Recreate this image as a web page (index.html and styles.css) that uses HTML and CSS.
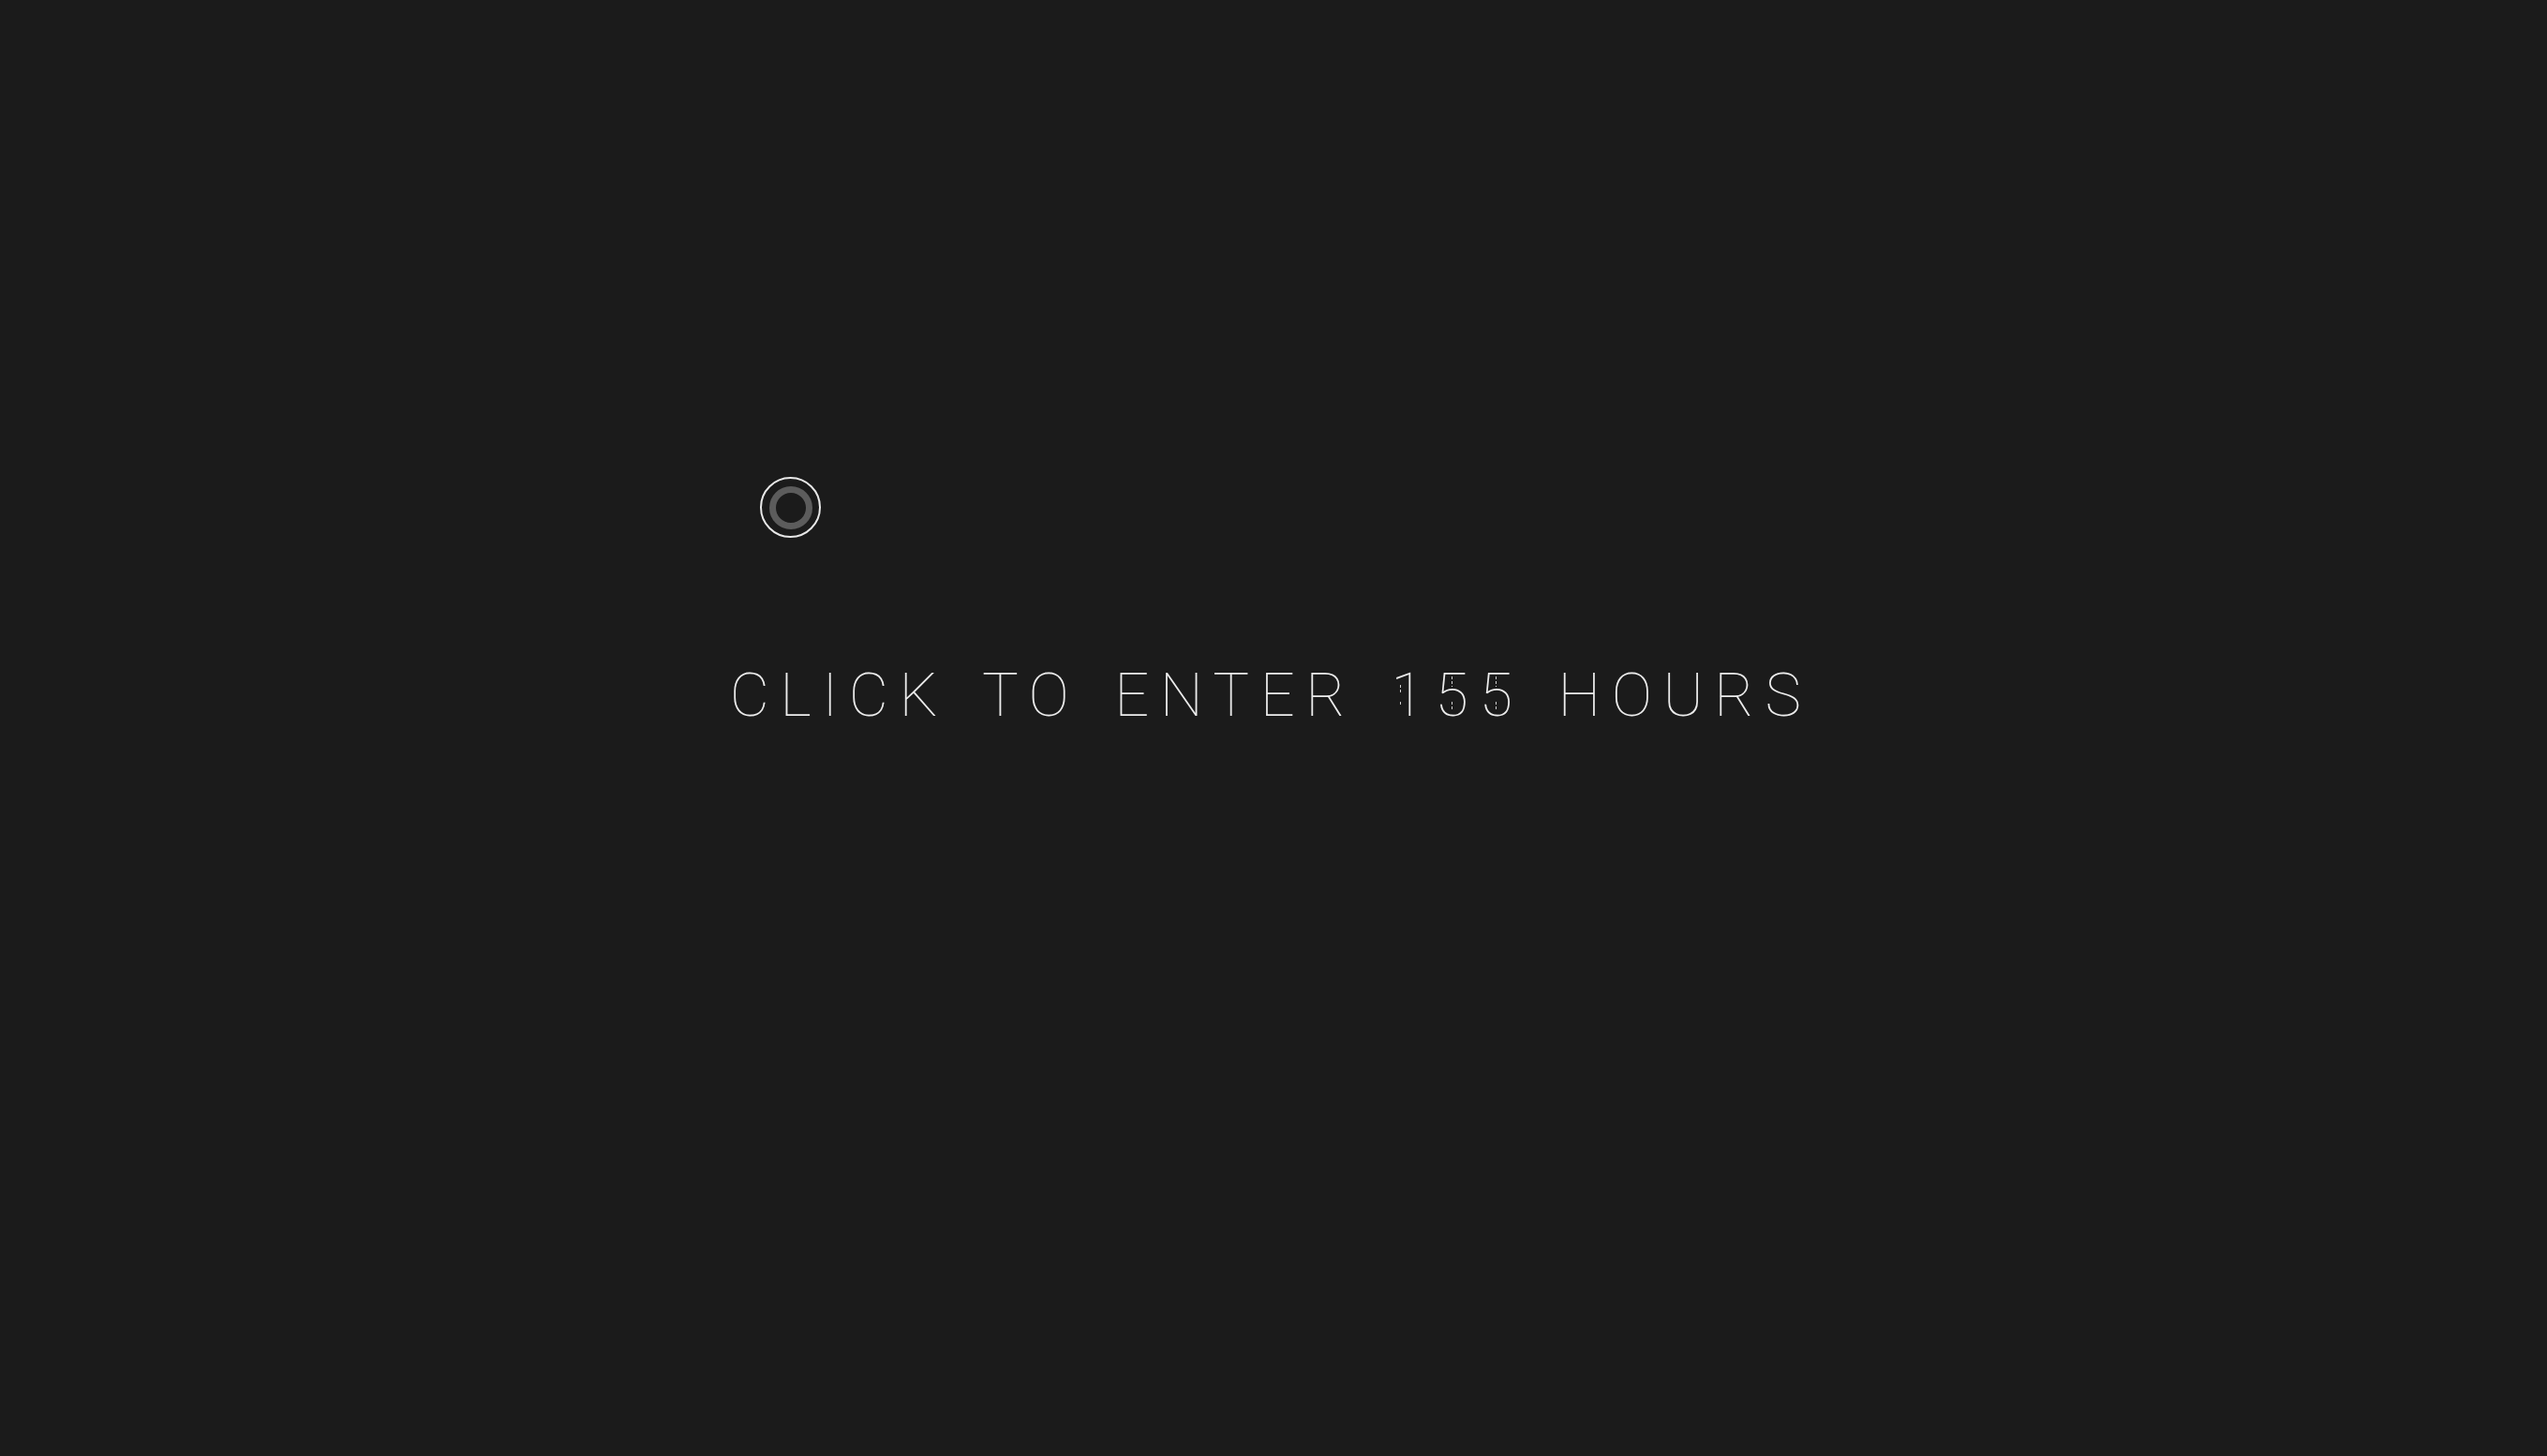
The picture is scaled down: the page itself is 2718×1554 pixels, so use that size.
FILE: index.html
```html
<!DOCTYPE html>
<html>
<head>
<meta charset="utf-8">
<link rel="stylesheet" href="styles.css">
</head>
<body>
<main class="stage">
  <h1 class="enter">CLICK TO ENTER <span class="digit d1">1</span><span class="digit d5">5</span><span class="digit d5">5</span> HOURS</h1>
</main>
<div class="cursor"><div class="cursor-inner"></div></div>
</body>
</html>
```

FILE: styles.css
```css
html, body {
  margin: 0;
  height: 100%;
  background: #1b1b1b;
}
body {
  font-family: "Roboto", "Liberation Sans", sans-serif;
  overflow: hidden;
}
.stage {
  height: 100%;
  display: flex;
  align-items: center;
  justify-content: center;
  padding-bottom: 70px;
  padding-right: 6px;
  box-sizing: border-box;
}
.enter {
  margin: 0;
  font-weight: 100;
  font-size: 65px;
  letter-spacing: 11.5px;
  word-spacing: 10px;
  color: #ececec;
  line-height: 1;
  white-space: nowrap;
}
.digit {
  position: relative;
  display: inline-block;
}
.digit::before,
.digit::after {
  content: "";
  position: absolute;
  width: 1px;
  background: repeating-linear-gradient(to bottom, #cfcfcf 0 3px, transparent 3px 5px);
}
.d1::before { left: 10px; top: 21px; height: 8px; }
.d1::after { left: 10px; top: 39px; height: 4px; }
.d5::before { left: 18px; top: 12px; height: 11px; }
.d5::after { left: 18px; top: 39px; height: 10px; }
.cursor {
  position: absolute;
  left: 811px;
  top: 509px;
  width: 65px;
  height: 65px;
  box-sizing: border-box;
  border: 2px solid #e8e8e8;
  border-radius: 50%;
  display: flex;
  align-items: center;
  justify-content: center;
}
.cursor-inner {
  width: 46px;
  height: 46px;
  box-sizing: border-box;
  border: 7px solid #5c5c5c;
  border-radius: 50%;
}
```
